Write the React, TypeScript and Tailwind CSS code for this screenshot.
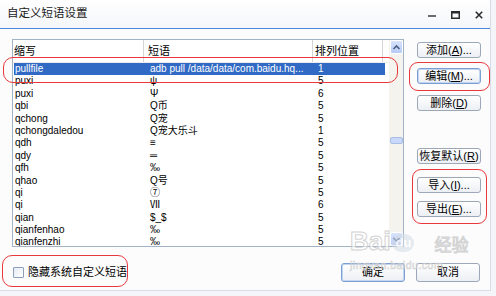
import React from 'react';

const rows: [string, string, string][] = [
  ['pullfile', 'adb pull /data/data/com.baidu.hq...', '1'],
  ['puxi', 'ψ', '5'],
  ['puxi', 'Ψ', '6'],
  ['qbi', 'Q币', '5'],
  ['qchong', 'Q宠', '5'],
  ['qchongdaledou', 'Q宠大乐斗', '1'],
  ['qdh', '≡', '5'],
  ['qdy', '═', '5'],
  ['qfh', '‰', '5'],
  ['qhao', 'Q号', '5'],
  ['qi', '⑦', '5'],
  ['qi', 'Ⅶ', '6'],
  ['qian', '$_$', '5'],
  ['qianfenhao', '‰', '5'],
  ['qianfenzhi', '‰', '5'],
];

function Btn({ label, hot, rest, focus, tall }: { label: string; hot: string; rest?: string; focus?: boolean; tall?: boolean }) {
  return (
    <div
      className={`${tall ? 'h-[19px]' : 'h-[16px]'} w-[64px] shrink-0 rounded-[3px] border flex items-center justify-center text-[11px] leading-none bg-gradient-to-b from-white to-[#eceff4] ${
        focus ? 'border-[#7c9fd3] shadow-[inset_0_0_0_1px_#c2d6f4]' : 'border-[#9ca7b8]'
      }`}
    >
      {label}
      {hot && (
        <>
          (<span className="underline">{hot}</span>)
        </>
      )}
      {rest}
    </div>
  );
}

export default function App() {
  return (
    <div className="relative w-[496px] h-[296px] overflow-hidden bg-[#f3f5f9] text-black font-['Liberation_Sans','Noto_Sans_CJK_SC',sans-serif]">
      <div className="w-[491px] h-[291px] bg-[#fcfcfd] border-r border-b border-[#d6dce5] flex flex-col">
        {/* Title bar */}
        <div className="h-[29px] shrink-0 flex items-center pl-[7px] pr-[7px] bg-gradient-to-b from-white to-[#f4f6f9] border-b border-[#4a88de]">
          <span className="text-[11.5px] text-[#1a1a1a]">自定义短语设置</span>
          <div className="ml-auto flex items-center gap-[15px] pt-[1px]">
            <svg width="8" height="8" viewBox="0 0 8 8">
              <rect x="0" y="4" width="8" height="2" fill="#6b6b6b" />
            </svg>
            <svg width="9" height="8" viewBox="0 0 9 8">
              <rect x="0.75" y="0.75" width="7.5" height="6.5" fill="none" stroke="#2b2b2b" strokeWidth="1.5" />
              <rect x="0" y="0" width="9" height="2.5" fill="#2b2b2b" />
            </svg>
            <svg width="8" height="8" viewBox="0 0 8 8">
              <path d="M0.8 0.8 L7.2 7.2 M7.2 0.8 L0.8 7.2" stroke="#2b2b2b" strokeWidth="1.6" />
            </svg>
          </div>
        </div>

        {/* Body */}
        <div className="flex pl-[12px] pt-[10px]">
          {/* List */}
          <div className="w-[392px] h-[208px] shrink-0 border border-[#a3b3c6] bg-white flex overflow-hidden">
            <div className="w-[376px] flex flex-col">
              <div className="h-[23px] shrink-0 flex text-[11px] border-b border-[#ececec]">
                <div className="w-[131px] pl-[1px] flex items-center border-r border-[#d4d4d4]">缩写</div>
                <div className="w-[169px] pl-[4px] flex items-center border-r border-[#d4d4d4]">短语</div>
                <div className="w-[70px] pl-[2px] flex items-center border-r border-[#d4d4d4]">排列位置</div>
              </div>
              <div className="flex flex-col text-[10px]">
                {rows.map(([a, b, c], i) => (
                  <div
                    key={i}
                    className={`h-[12.4px] leading-[12.4px] shrink-0 ml-[1px] w-[371px] flex whitespace-nowrap ${
                      i === 0 ? 'bg-[#316ac5] text-white' : ''
                    }`}
                  >
                    <div className="w-[130px] pl-[1px]">{a}</div>
                    <div className="w-[169px] pl-[6px]">{b}</div>
                    <div className="w-[70px] pl-[5px]">{c}</div>
                  </div>
                ))}
              </div>
            </div>
            {/* Scrollbar */}
            <div className="w-[14px] ml-auto h-full bg-[#f4f3ee] flex flex-col items-center">
              <div className="w-[13px] h-[14px] rounded-[2px] border border-white bg-gradient-to-b from-[#d8e4fd] to-[#b7cbf5] flex items-center justify-center">
                <svg width="9" height="7" viewBox="0 0 9 7">
                  <path d="M1.5 5 L4.5 2 L7.5 5" fill="none" stroke="#4d6185" strokeWidth="1.6" />
                </svg>
              </div>
              <div className="mt-[83px] w-[13px] h-[7px] rounded-[2px] border border-[#a9bde6] bg-[#c9d8fa]" />
              <div className="mt-auto w-[13px] h-[14px] rounded-[2px] border border-white bg-gradient-to-b from-[#d8e4fd] to-[#b7cbf5] flex items-center justify-center">
                <svg width="9" height="7" viewBox="0 0 9 7">
                  <path d="M1.5 2 L4.5 5 L7.5 2" fill="none" stroke="#4d6185" strokeWidth="1.6" />
                </svg>
              </div>
            </div>
          </div>

          {/* Side buttons */}
          <div className="ml-[13px] pt-[3px] flex flex-col">
            <Btn label="添加" hot="A" rest="..." />
            <div className="mt-[10px]">
              <Btn label="编辑" hot="M" rest="..." focus />
            </div>
            <div className="mt-[11px]">
              <Btn label="删除" hot="D" />
            </div>
            <div className="mt-[37px]">
              <Btn label="恢复默认" hot="R" />
            </div>
            <div className="mt-[13px]">
              <Btn label="导入" hot="I" rest="..." />
            </div>
            <div className="mt-[8px]">
              <Btn label="导出" hot="E" rest="..." />
            </div>
          </div>
        </div>

        {/* Bottom row */}
        <div className="mt-[16px] h-[19px] flex items-center pl-[13px] pr-[10px]">
          <div className="w-[11px] h-[11px] border border-[#8aa0bb] rounded-[1px] bg-gradient-to-br from-[#e6ebf2] to-white" />
          <span className="ml-[4px] text-[11px]">隐藏系统自定义短语</span>
          <div className="ml-auto flex gap-[11px]">
            <Btn label="确定" hot="" tall focus />
            <Btn label="取消" hot="" tall />
          </div>
        </div>
      </div>

      {/* Watermark */}
      <div className="absolute left-[350px] top-[228px] pointer-events-none select-none opacity-80">
        <div className="flex items-end">
          <span className="text-[26px] leading-none font-bold text-white/70 [-webkit-text-stroke:1px_#c9c9c9]">Bai</span>
          <span className="ml-[2px] mb-[2px] w-[22px] h-[18px] rounded-full bg-[#d4dbe6]/70 text-white text-[13px] font-bold leading-[18px] text-center">du</span>
          <span className="ml-[20px] text-[17px] leading-none text-white/70 [-webkit-text-stroke:1px_#c9c9c9]">经验</span>
        </div>
        <div className="mt-[6px] text-[10.5px] leading-none tracking-[0.5px] text-white/70 [-webkit-text-stroke:0.6px_#c9c9c9]">jingyan.baidu.com</div>
      </div>

      {/* Red annotations */}
      <div className="absolute left-[3px] top-[57px] w-[395px] h-[26px] rounded-[10px] border-[1.5px] border-[#e8383c]" />
      <div className="absolute left-[409px] top-[62px] w-[81px] h-[29px] rounded-[9px] border-[1.5px] border-[#e8383c]" />
      <div className="absolute left-[412px] top-[169px] w-[75px] h-[55px] rounded-[9px] border-[1.5px] border-[#e8383c]" />
      <div className="absolute left-[2px] top-[255px] w-[126px] h-[32px] rounded-[10px] border-[1.5px] border-[#e8383c]" />
    </div>
  );
}
